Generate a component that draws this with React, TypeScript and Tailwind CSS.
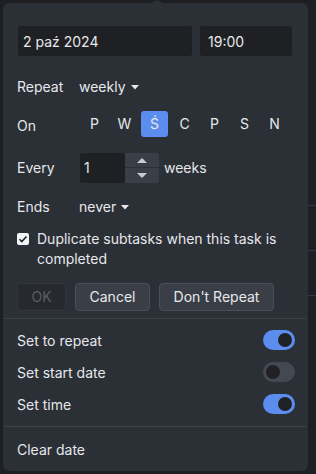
import React from "react";

const days = ["P", "W", "Ś", "C", "P", "S", "N"];

function Toggle({on}: {on: boolean}) {
    return (
        <div className={`w-[32px] h-[20px] rounded-full flex items-center px-[3px] ${on ? "bg-[#5b8def] justify-end" : "bg-[#444951] justify-start"}`}>
            <div className="w-[14px] h-[14px] rounded-full bg-[#1f2125]"></div>
        </div>
    );
}

function Caret() {
    return (
        <svg width="8" height="5" viewBox="0 0 8 5" className="ml-[5px] mt-[2px]">
            <path d="M0 0h8L4 4.5z" fill="#e6e8eb"/>
        </svg>
    );
}

export default function App() {
    return (
        <div className="w-[316px] h-[474px] bg-[#1d1f22] relative overflow-hidden text-[#e6e8eb] text-[14px]" style={{fontFamily: "Inter, 'Noto Sans', sans-serif"}}>
            <div className="absolute left-[149px] top-0 w-0 h-0 border-l-[8px] border-r-[8px] border-b-[4px] border-l-transparent border-r-transparent border-b-[#2b2f36]"></div>
            <div className="absolute right-0 top-[205px] w-[8px] h-px bg-[#33363b]"></div>
            <div className="absolute right-0 top-[250px] w-[8px] h-px bg-[#33363b]"></div>
            <div className="absolute right-0 top-[295px] w-[8px] h-px bg-[#33363b]"></div>
            <div className="ml-[3px] mt-[3px] w-[305px] h-[468px] rounded-[6px] bg-[#2b2f36] flex flex-col">
                <div className="flex gap-[8px] pl-[15px] pt-[23px]">
                    <div className="w-[174px] h-[30px] rounded-[3px] bg-[#1f2023] flex items-center pl-[5px]">2 paź 2024</div>
                    <div className="w-[92px] h-[30px] rounded-[3px] bg-[#1f2023] flex items-center pl-[8px]">19:00</div>
                </div>
                <div className="flex items-center h-[24px] mt-[19px] pl-[14px]">
                    <span className="w-[62px]">Repeat</span>
                    <span className="flex items-center">weekly<Caret/></span>
                </div>
                <div className="flex items-center h-[26px] mt-[12px] pl-[14px]">
                    <span className="w-[64px] mt-[4px]">On</span>
                    <div className="flex gap-[3px]">
                        {days.map((d, i) => (
                            <div key={i} className={`w-[27px] h-[26px] rounded-[3px] flex items-center justify-center ${i === 2 ? "bg-[#5b8def]" : ""}`}>{d}</div>
                        ))}
                    </div>
                </div>
                <div className="flex items-center h-[30px] mt-[16px] pl-[14px]">
                    <span className="w-[63px]">Every</span>
                    <div className="flex h-[30px] rounded-[3px] overflow-hidden">
                        <div className="w-[45px] bg-[#1f2023] flex items-center pl-[4px]">1</div>
                        <div className="w-[34px] bg-[#3a3f47] flex flex-col">
                            <div className="flex-1 flex items-center justify-center border-b border-[#2b2f36]">
                                <svg width="10" height="5" viewBox="0 0 10 5"><path d="M0 5h10L5 0z" fill="#c9ccd1"/></svg>
                            </div>
                            <div className="flex-1 flex items-center justify-center">
                                <svg width="10" height="5" viewBox="0 0 10 5"><path d="M0 0h10L5 5z" fill="#c9ccd1"/></svg>
                            </div>
                        </div>
                    </div>
                    <span className="ml-[5px]">weeks</span>
                </div>
                <div className="flex items-center h-[24px] mt-[12px] pl-[14px]">
                    <span className="w-[62px]">Ends</span>
                    <span className="flex items-center">never<Caret/></span>
                </div>
                <div className="flex mt-[10px] pl-[14px] pr-[20px] leading-[20px]">
                    <div className="w-[12px] h-[12px] mt-[4px] bg-[#f3f4f6] rounded-[2px] flex items-center justify-center shrink-0">
                        <svg width="10" height="10" viewBox="0 0 10 10"><path d="M1.5 5.2l2.3 2.3L8.5 2.5" stroke="#1f2023" strokeWidth="1.6" fill="none"/></svg>
                    </div>
                    <span className="ml-[8px]">Duplicate subtasks when this task is completed</span>
                </div>
                <div className="flex gap-[9px] mt-[14px] pl-[14px]">
                    <div className="w-[49px] h-[28px] rounded-[4px] bg-[#26292e] border border-[#33363b] text-[#5b5f65] flex items-center justify-center">OK</div>
                    <div className="w-[75px] h-[28px] rounded-[4px] bg-[#3a3f47] border border-[#4b5058] flex items-center justify-center">Cancel</div>
                    <div className="w-[115px] h-[28px] rounded-[4px] bg-[#3a3f47] border border-[#4b5058] flex items-center justify-center">Don't Repeat</div>
                </div>
                <div className="h-px bg-[#3d4148] mt-[7px] mx-[2px]"></div>
                <div className="flex flex-col pt-[6px]">
                    {[["Set to repeat", true], ["Set start date", false], ["Set time", true]].map(([label, on], i) => (
                        <div key={i} className="flex items-center justify-between h-[32px] pl-[14px] pr-[13px]">
                            <span>{label as string}</span>
                            <Toggle on={on as boolean}/>
                        </div>
                    ))}
                </div>
                <div className="h-px bg-[#3d4148] mt-[6px] mx-[2px]"></div>
                <div className="flex items-center h-[44px] pl-[14px]">Clear date</div>
            </div>
        </div>
    );
}
